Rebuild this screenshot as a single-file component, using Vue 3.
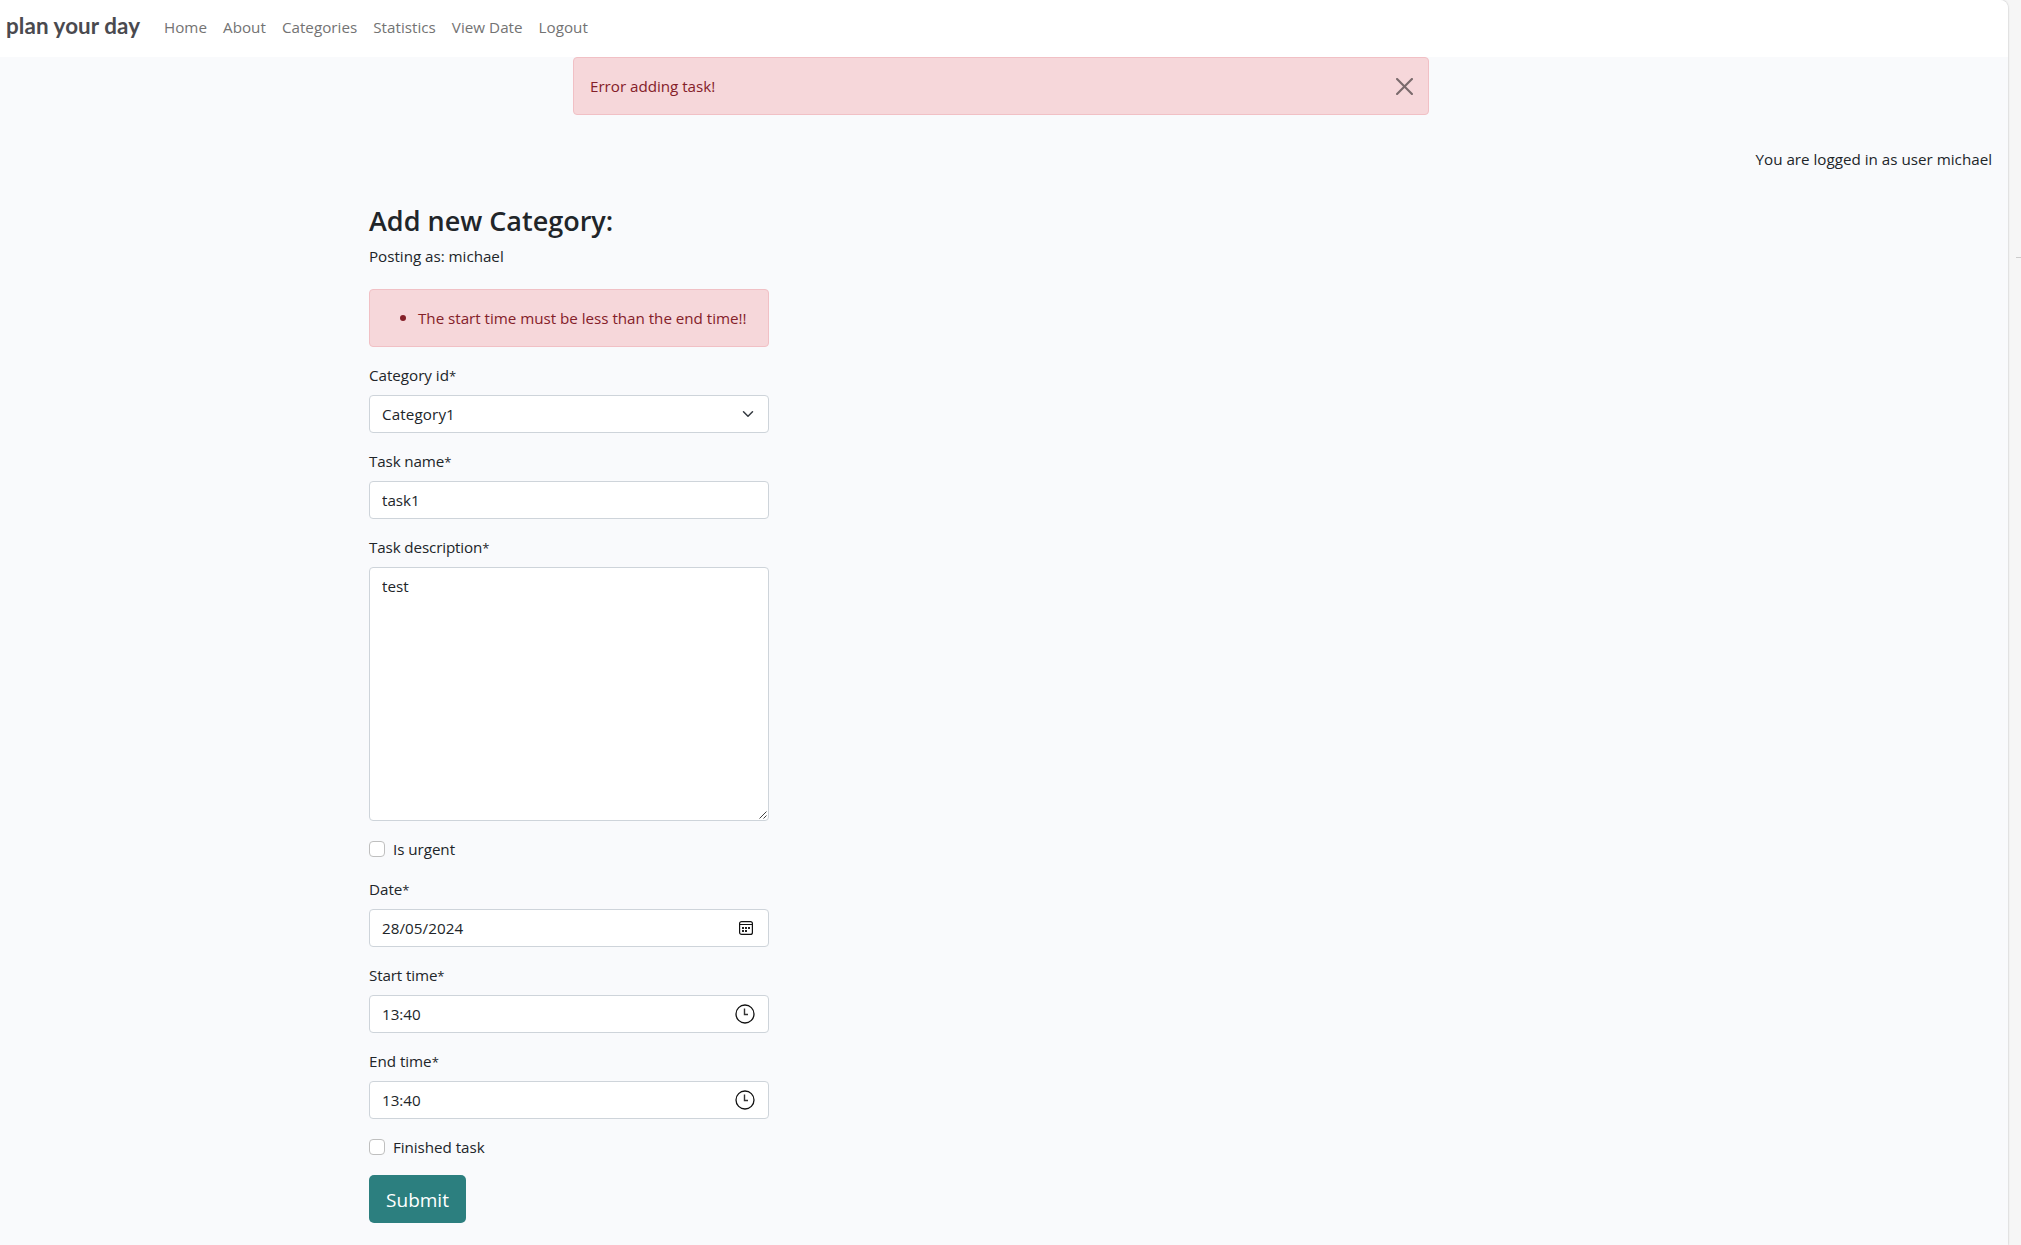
<script setup>
import { ref } from 'vue'

const links = ['Home', 'About', 'Categories', 'Statistics', 'View Date', 'Logout']
const taskName = ref('task1')
const description = ref('test')
const date = ref('28/05/2024')
const startTime = ref('13:40')
const endTime = ref('13:40')
const urgent = ref(false)
const finished = ref(false)
</script>

<template>
  <div class="window">
    <div class="page">
      <nav class="navbar">
        <a class="brand">plan your day</a>
        <a v-for="link in links" :key="link" class="link">{{ link }}</a>
      </nav>

      <div class="alert message">
        <span>Error adding task!</span>
        <svg class="close" width="17" height="17" viewBox="0 0 16 16">
          <path d="M.293.293a1 1 0 011.414 0L8 6.586 14.293.293a1 1 0 111.414 1.414L9.414 8l6.293 6.293a1 1 0 01-1.414 1.414L8 9.414l-6.293 6.293a1 1 0 01-1.414-1.414L6.586 8 .293 1.707a1 1 0 010-1.414z" />
        </svg>
      </div>

      <p class="user">You are logged in as user michael</p>

      <form class="form" @submit.prevent>
        <h3>Add new Category:</h3>
        <p class="posting">Posting as: michael</p>
        <div class="alert errors">
          <i class="bullet"></i>
          <span>The start time must be less than the end time!!</span>
        </div>

        <label class="label">Category id<span class="star">*</span></label>
        <div class="control">
          <span class="value category">Category1</span>
          <svg class="chevron" width="16" height="12" viewBox="0 0 16 16" preserveAspectRatio="xMidYMid meet">
            <path fill="none" stroke="#343a40" stroke-linecap="round" stroke-linejoin="round" stroke-width="2" d="M2 5l6 6 6-6" />
          </svg>
        </div>

        <label class="label narrow">Task name<span class="star">*</span></label>
        <div class="control"><input v-model="taskName" class="value" type="text" /></div>

        <label class="label narrow">Task description<span class="star">*</span></label>
        <div class="control area">
          <textarea v-model="description" class="value"></textarea>
          <svg class="grip" width="8" height="8" viewBox="0 0 8 8">
            <path d="M.5 7.5l7-7M4.5 7.5l3-3" fill="none" stroke="#444" />
          </svg>
        </div>

        <label class="check"><input v-model="urgent" type="checkbox" />Is urgent</label>

        <label class="label">Date<span class="star">*</span></label>
        <div class="control">
          <input v-model="date" class="value date" type="text" />
          <svg class="calendar" width="14" height="14" viewBox="0 0 14 14">
            <rect x=".6" y=".6" width="12.8" height="12.8" rx="2" fill="none" stroke="#111" stroke-width="1.2" />
            <path d="M1 3.5h12" stroke="#111" />
            <path d="M6 6h2v2H6zM9 6h2v2H9zM3 9h2v2H3zM6 9h2v2H6zM3 6h2v2H3z" fill="#222" />
          </svg>
        </div>

        <label class="label narrow">Start time<span class="star">*</span></label>
        <div class="control">
          <input v-model="startTime" class="value" type="text" />
          <svg class="clock" width="20" height="20" viewBox="0 0 20 20">
            <circle cx="10" cy="10" r="9" fill="none" stroke="#111" stroke-width="1.3" />
            <path d="M9.5 4.5v6H13" fill="none" stroke="#333" stroke-width="1.4" />
          </svg>
        </div>

        <label class="label">End time<span class="star">*</span></label>
        <div class="control">
          <input v-model="endTime" class="value" type="text" />
          <svg class="clock" width="20" height="20" viewBox="0 0 20 20">
            <circle cx="10" cy="10" r="9" fill="none" stroke="#111" stroke-width="1.3" />
            <path d="M9.5 4.5v6H13" fill="none" stroke="#333" stroke-width="1.4" />
          </svg>
        </div>

        <label class="check"><input v-model="finished" type="checkbox" />Finished task</label>

        <button class="submit">Submit</button>
      </form>
    </div>
    <aside class="gutter"><i class="tick"></i></aside>
  </div>
</template>

<style>
body { margin: 0; overflow: hidden; }
</style>

<style scoped>
* { box-sizing: border-box; }
.window {
  display: flex;
  height: 1245px;
  background: #f6f6f6;
  color: #212529;
  font: 15.2px/24px "Open Sans", "Noto Sans", sans-serif;
  letter-spacing: -0.025px;
}
.page {
  width: 2008px;
  height: 1245px;
  overflow: hidden;
  background: #f9fafc;
  border-top-right-radius: 8px;
  box-shadow: 0 0 2px rgba(0, 0, 0, 0.3);
}
.navbar {
  display: flex;
  align-items: center;
  height: 57px;
  padding: 0 0 4px 6px;
  background: #fff;
  letter-spacing: 0.02px;
}
.brand {
  width: 150px;
  margin-top: -1px;
  color: #4a4a4f;
  font: 700 22.4px/30px Lato, sans-serif;
  letter-spacing: 0.09px;
}
.link { padding: 1px 8px 0; color: #737373; }
.alert {
  display: flex;
  align-items: center;
  height: 58px;
  border: 1px solid #f1c0c5;
  border-radius: 4px;
  background: #f6d7da;
  color: #842029;
}
.message {
  width: 856px;
  margin-left: 573px;
  padding: 0 15px 0 16px;
  justify-content: space-between;
}
.close { fill: #000; opacity: 0.5; }
.user { margin: 32px 16px 0 0; text-align: right; letter-spacing: 0; }
.form { width: 400px; margin: 33px 0 0 369px; }
h3 { margin: 0; font-size: 27px; font-weight: 600; line-height: 34px; letter-spacing: 0; }
.posting { margin: 6px 0 21px; }
.errors { margin-bottom: 16px; padding-left: 30px; }
.bullet {
  width: 6px;
  height: 6px;
  margin-right: 12px;
  border-radius: 50%;
  background: #842029;
}
.label { display: block; height: 24px; margin-bottom: 8px; }
.narrow { letter-spacing: -0.13px; }
.star { font-size: 13px; line-height: 1; }
.control {
  display: flex;
  align-items: center;
  height: 38px;
  margin-bottom: 16px;
  padding: 0 12px;
  border: 1px solid #ced4da;
  border-radius: 4px;
  background: #fff;
}
.value {
  flex: 1;
  min-width: 0;
  height: 24px;
  padding: 0;
  border: 0;
  outline: 0;
  background: none;
  color: inherit;
  font: inherit;
}
.category { letter-spacing: 0.12px; }
.date { letter-spacing: 0.06px; }
.control svg { flex: none; }
.area { position: relative; height: 254px; padding: 6px 12px; }
.area .value { height: 100%; resize: none; }
.grip { position: absolute; right: 1px; bottom: 1px; }
.calendar { margin-right: 3px; }
.clock { margin: 0 1px 1px 0; }
.check { display: flex; height: 24px; margin-bottom: 16px; letter-spacing: -0.05px; }
.check input {
  width: 16px;
  height: 16px;
  margin: 4px 8px 0 0;
  appearance: none;
  border: 1px solid #bfbfbf;
  border-radius: 4px;
  background: #fff;
}
.submit {
  display: block;
  width: 97px;
  height: 48px;
  padding: 1px 0 0;
  border: 0;
  border-radius: 5px;
  background: #2c7f7f;
  color: #fff;
  font: 19px/30px "Open Sans", "Noto Sans", sans-serif;
}
.gutter { flex: 1; padding: 257px 0 0 8px; }
.tick { display: block; height: 1px; background: #ccc; }
</style>
